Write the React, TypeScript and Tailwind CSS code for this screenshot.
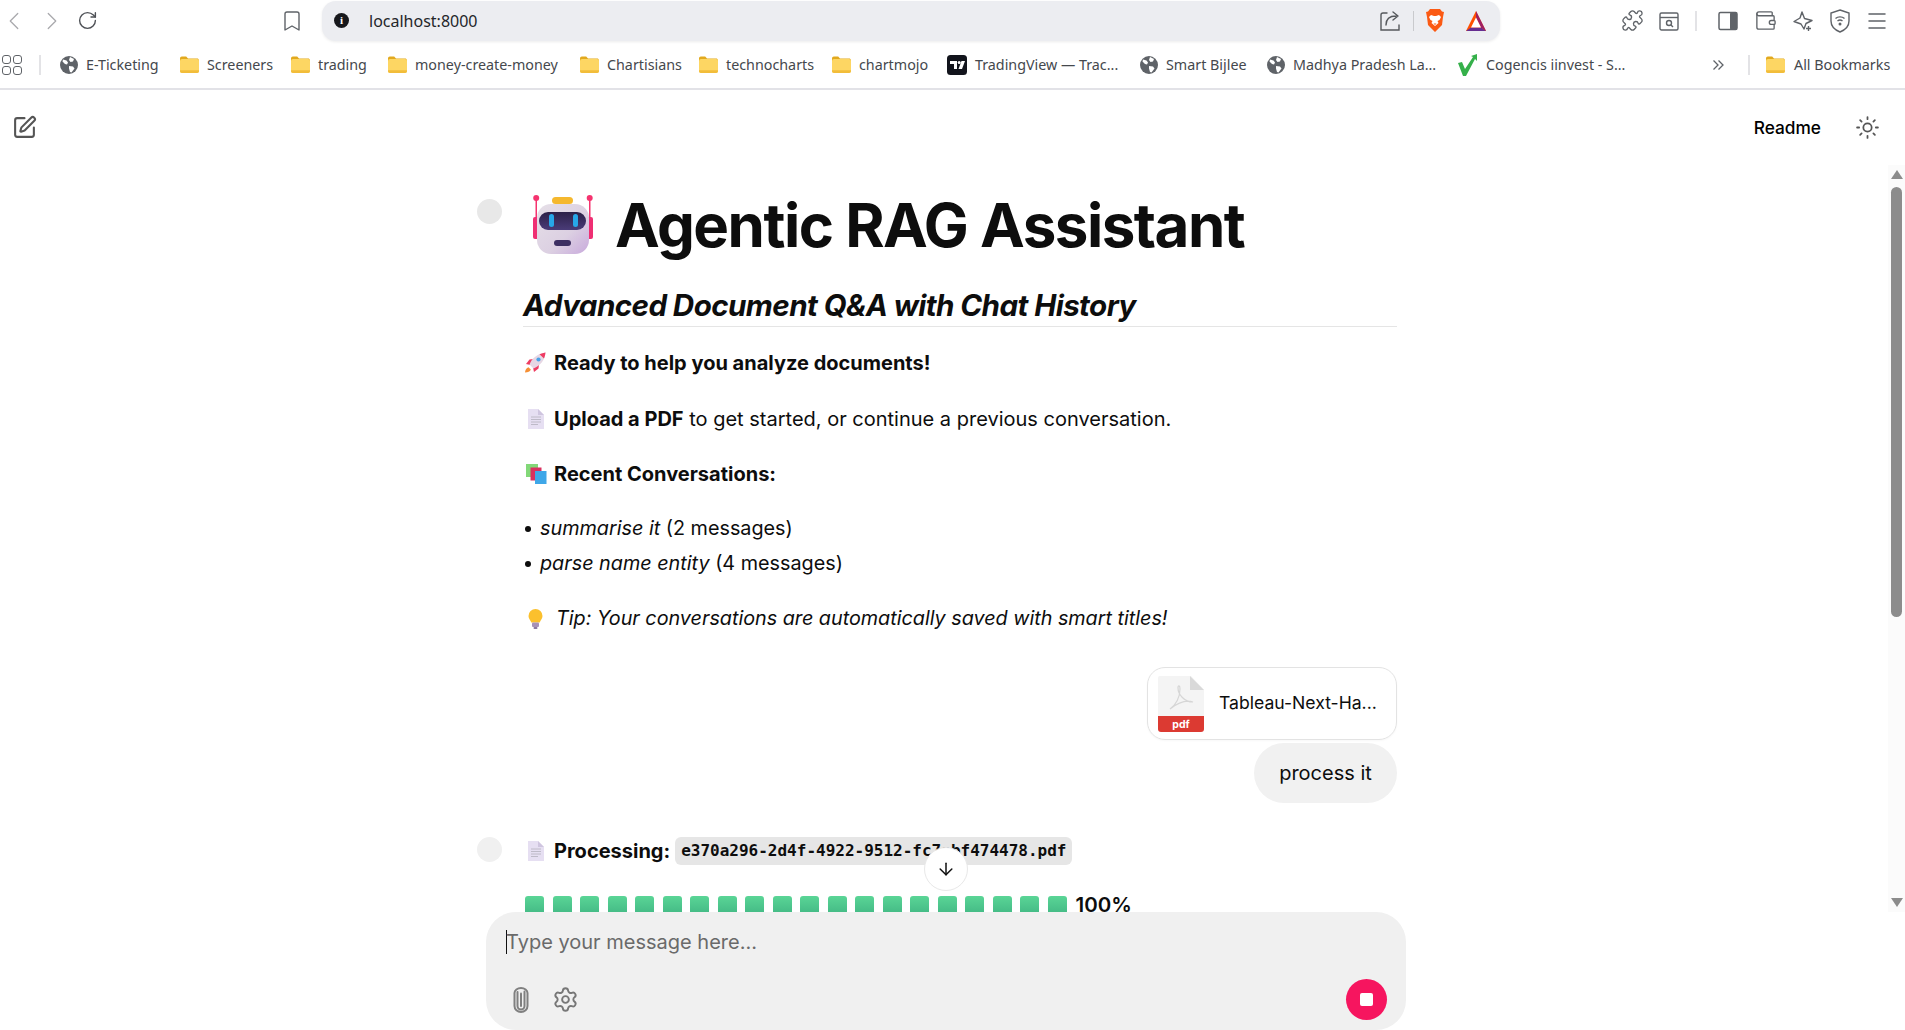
import React from "react";
import { ArrowDown, Bookmark, ChevronLeft, ChevronRight, Menu, Puzzle, RotateCw, Settings, SquarePen, Sun, Wallet } from "lucide-react";

const Folder = () => (
  <svg width="19" height="17" viewBox="0 0 19 17" className="shrink-0">
    <path d="M0 2.500C0 1.400.8.600 1.800.600h4.400l1.800 2h9.200c.9 0 1.600.7 1.600 1.600V8H0z" fill="#e2a91e" />
    <rect x="0" y="3" width="19" height="14" rx="2" fill="#fdd663" />
    <path d="M0 15c0 1.100.9 2 2 2h15c1.100 0 2-.9 2-2v-.8H0z" fill="#f2bd3a" />
  </svg>
);

const Globe = () => (
  <svg width="18" height="18" viewBox="0 0 18 18" className="shrink-0">
    <circle cx="9" cy="9" r="9" fill="#5f6368" />
    <path d="M3 3.500l3.500 1 1.500 2-1 2-2-.5-2.500-2.500zM10 1l4 2-1 2.500-2.500.5-1.500-2zM9 10l4 .5 1.500 2-3 4-1.500-.5-1-3.500z" fill="#fff" />
  </svg>
);

const TradingViewIcon = () => (
  <svg width="20" height="20" viewBox="0 0 20 20" className="shrink-0">
    <rect width="20" height="20" rx="3.500" fill="#12141c" />
    <path d="M3 6h7v8H7V9H3z" fill="#fff" />
    <circle cx="12.200" cy="7.500" r="1.500" fill="#fff" />
    <path d="M14.500 6H18l-3 8h-3.500z" fill="#fff" />
  </svg>
);

const GreenCheck = () => (
  <svg width="20" height="22" viewBox="0 0 20 22" className="shrink-0">
    <path d="M0 9l4-1 3 7L15 3l-2-1 6-2v7l-2-2-9 17H5z" fill="#35b04a" />
  </svg>
);

const BraveLion = () => (
  <svg width="18" height="23" viewBox="0 0 18 23">
    <path d="M4 0h10l2 2.500 2 .5-1 5-1 8-7 7-7-7-1-8-1-5 2-.5z" fill="#fb5a14" />
    <path d="M5 6l3 1h2l3-1 2 2-1.500 3-2 1 1 2-3.500 3-3.500-3 1-2-2-1L3 8z" fill="#fff" />
    <path d="M7.500 14.500h3l-1.500 1.500z" fill="#fb5a14" />
  </svg>
);

const BatTriangle = () => (
  <svg width="20" height="20" viewBox="0 0 20 20">
    <path d="M10 0l10 20H0z" fill="#ff5000" />
    <path d="M10 0l10 20-5-3.500L10 6.500z" fill="#9e1f63" />
    <path d="M0 20l5-3.500h10l5 3.500z" fill="#662d91" />
    <path d="M10 6.500l5 10H5z" fill="#fff" />
  </svg>
);

const Robot = () => (
  <svg width="62" height="62" viewBox="0 0 62 62" className="shrink-0">
    <defs>
      <linearGradient id="head" x1="0" y1="0" x2="1" y2="1">
        <stop offset="0" stopColor="#e6e0e8" />
        <stop offset="0.600" stopColor="#dcd0e2" />
        <stop offset="1" stopColor="#c8a9dc" />
      </linearGradient>
      <linearGradient id="visor" x1="0" y1="0" x2="0" y2="1">
        <stop offset="0" stopColor="#2c2148" />
        <stop offset="1" stopColor="#4a3c78" />
      </linearGradient>
    </defs>
    <rect x="3.500" y="4" width="1.500" height="22" fill="#f5336f" />
    <rect x="57" y="4" width="1.500" height="22" fill="#f5336f" />
    <circle cx="4.200" cy="4" r="3" fill="#f5336f" />
    <circle cx="57.700" cy="4" r="3" fill="#f5336f" />
    <rect x="1" y="23" width="6" height="22" rx="2" fill="#ef2f73" />
    <rect x="55" y="23" width="6" height="22" rx="2" fill="#ef2f73" />
    <rect x="20" y="3" width="21" height="7" rx="3.500" fill="#f5b82e" />
    <rect x="5" y="10" width="52" height="50" rx="14" fill="url(#head)" />
    <rect x="7" y="18" width="47" height="18" rx="9" fill="url(#visor)" />
    <rect x="17" y="20" width="5" height="13" rx="2.500" fill="#27a7e8" />
    <rect x="41" y="20" width="5" height="13" rx="2.500" fill="#27a7e8" />
    <rect x="22" y="46" width="17" height="6" rx="3" fill="#3d2f62" />
  </svg>
);

const Rocket = () => (
  <svg width="21" height="21" viewBox="0 0 21 21" className="shrink-0">
    <path d="M1 12l3.500-4.500 4-.5-3 6z" fill="#ee3d62" />
    <path d="M9 20l4.500-3.500.5-4-6 3z" fill="#ee3d62" />
    <path d="M4.500 12.500C7 6 12 2 20.500.5 20 8 15.500 13.500 8.500 16.500z" fill="#e6d7e4" />
    <path d="M14.500 2.200C16.500 1.400 18.500 1 20.500.5c-.2 2.200-.7 4-1.500 6z" fill="#ef3b63" />
    <circle cx="13.500" cy="7.500" r="2.100" fill="#4aa3e8" />
    <path d="M0 20.500c.2-2.800 1.300-4.500 3.500-5.300l2.300 2.300c-.7 2.200-2.800 3-5.800 3z" fill="#f69035" />
  </svg>
);

const Doc = () => (
  <svg width="16" height="20" viewBox="0 0 16 20" className="shrink-0">
    <path d="M0 0h10l6 6v14H0z" fill="#e6dff2" />
    <path d="M10 0l6 6h-6z" fill="#cfc5df" />
    <path d="M3 8h10M3 10.500h10M3 13h10M3 15.500h7" stroke="#b4b0bd" strokeWidth="0.800" />
  </svg>
);

const Books = () => (
  <svg width="21" height="20" viewBox="0 0 21 20" className="shrink-0">
    <rect x="0" y="0" width="12" height="13" fill="#82d878" />
    <rect x="4.500" y="3.500" width="11" height="13" fill="#d9305f" />
    <rect x="9" y="7" width="11.500" height="13" fill="#3fa7e8" />
  </svg>
);

const Bulb = () => (
  <svg width="15" height="20" viewBox="0 0 15 20" className="shrink-0">
    <path d="M7.500 0a7 7 0 0 1 7 7c0 2.800-1.800 4-2.800 6.500H3.300C2.300 11 .5 9.800.5 7a7 7 0 0 1 7-7z" fill="#fbc02d" />
    <rect x="4" y="13.500" width="7" height="4.500" rx="1" fill="#a792b8" />
    <rect x="5.500" y="18" width="4" height="2" rx="1" fill="#8b78a0" />
  </svg>
);

const PdfIcon = () => (
  <svg width="46" height="56" viewBox="0 0 46 56" className="shrink-0">
    <path d="M2 0h31l13 14v27H0V2a2 2 0 0 1 2-2z" fill="#f4f4f4" />
    <path d="M32 0l14 14H32z" fill="#d9d9d9" />
    <path d="M12 33c6-4 10-12 10-20 0-4-2-4-2-1 0 6 6 14 15 14-6-2-14 0-23 7z" fill="none" stroke="#d6d6d6" strokeWidth="1.200" />
    <path d="M0 40h46v13a3 3 0 0 1-3 3H3a3 3 0 0 1-3-3z" fill="#dc3a32" />
    <text x="23" y="52" textAnchor="middle" fontSize="10.500" fontWeight="700" fill="#fff" fontFamily="Inter, sans-serif">pdf</text>
  </svg>
);

const VerticalClip = () => (
  <svg width="16" height="26" viewBox="0 0 16 26" fill="none" stroke="#808080" strokeWidth="2" strokeLinecap="round" className="ml-[7px]">
    <path d="M8 6.500v12.500" />
    <path d="M11.500 4.500v14.500a3.500 3.500 0 0 1-7 0V6a2.800 4 0 0 1 0-1" />
    <path d="M14.500 6v13a6.500 6 0 0 1-13 0V6a6.500 5 0 0 1 13 0" />
  </svg>
);

const bookmarks = [
  { icon: <Globe />, label: "E-Ticketing", w: "w-[73px]", ml: "ml-[19px]" },
  { icon: <Folder />, label: "Screeners", w: "w-[64px]", ml: "ml-[21px]" },
  { icon: <Folder />, label: "trading", w: "w-[49px]", ml: "ml-[20px]" },
  { icon: <Folder />, label: "money-create-money", w: "w-[144px]", ml: "ml-[21px]" },
  { icon: <Folder />, label: "Chartisians", w: "w-[72px]", ml: "ml-[21px]" },
  { icon: <Folder />, label: "technocharts", w: "w-[85px]", ml: "ml-[20px]" },
  { icon: <Folder />, label: "chartmojo", w: "w-[68px]", ml: "ml-[21px]" },
  { icon: <TradingViewIcon />, label: "TradingView — Trac...", w: "w-[142px]", ml: "ml-[20px]" },
  { icon: <Globe />, label: "Smart Bijlee", w: "w-[78px]", ml: "ml-[23px]" },
  { icon: <Globe />, label: "Madhya Pradesh La...", w: "w-[140px]", ml: "ml-[23px]" },
  { icon: <GreenCheck />, label: "Cogencis iinvest - S...", w: "w-[138px]", ml: "ml-[25px]" },
];

const blocks = Array.from({ length: 20 }, (_, i) => i);

export default function App() {
  return (
    <div className="flex h-[1030px] w-[1905px] flex-col overflow-hidden bg-white font-['Inter',sans-serif] text-[#0d0d0d]">
      {/* Browser toolbar */}
      <div className="flex h-[41px] shrink-0 items-center text-[#5f6368]">
        <ChevronLeft size={30} strokeWidth={1} className="ml-[-1px] text-[#a9a9ad]" />
        <ChevronRight size={30} strokeWidth={1} className="ml-[8px] text-[#a9a9ad]" />
        <RotateCw size={21} strokeWidth={1.6} className="ml-[10px] text-[#4e5156]" />
        <Bookmark size={24} strokeWidth={1.4} className="ml-[182px]" />
        <div className="ml-[18px] flex h-[40px] w-[1178px] items-center rounded-[14px] bg-[#ecedf1] shadow-[0_1px_3px_rgba(0,0,0,0.08)]">
          <span className="ml-[12px] flex size-[15px] items-center justify-center rounded-full bg-[#17181c] font-['Liberation_Serif',serif] text-[11px] font-bold leading-none text-white">i</span>
          <span className="ml-[20px] pt-[1px] font-['Noto_Sans',sans-serif] text-[16px] text-[#24262a]">localhost:8000</span>
          <svg width="22" height="22" viewBox="0 0 22 22" fill="none" stroke="#55585c" strokeWidth="1.400" className="ml-auto">
            <path d="M8 3H4a2 2 0 0 0-2 2v15h18v-5" strokeLinecap="round" />
            <path d="M7 15c0-6 4-9 10-9M14 2l5 4-5 4" strokeLinecap="round" strokeLinejoin="round" />
          </svg>
          <div className="ml-[12px] h-[20px] w-px bg-[#c9cacd]" />
          <div className="ml-[12px] flex"><BraveLion /></div>
          <div className="ml-[22px] mr-[14px] flex"><BatTriangle /></div>
        </div>
        <Puzzle size={23} strokeWidth={1.4} className="ml-[121px]" />
        <svg width="20" height="20" viewBox="0 0 20 20" fill="none" stroke="#5f6368" strokeWidth="1.400" className="ml-[15px]">
          <rect x="1" y="2" width="18" height="17" rx="1.500" />
          <path d="M1 6.500h18" />
          <circle cx="10" cy="12" r="2.500" />
          <path d="M12 14l2 2" />
        </svg>
        <div className="ml-[16px] h-[20px] w-[2px] bg-[#e3e3e6]" />
        <svg width="20" height="20" viewBox="0 0 20 20" className="ml-[21px]">
          <rect x="1" y="1.500" width="18" height="17" rx="1.500" fill="none" stroke="#5f6368" strokeWidth="1.500" />
          <rect x="12" y="1.500" width="7" height="17" rx="1" fill="#5f6368" />
        </svg>
        <Wallet size={23} strokeWidth={1.4} className="ml-[16px]" />
        <svg width="22" height="22" viewBox="0 0 22 22" fill="none" stroke="#5f6368" strokeWidth="1.400" className="ml-[15px]">
          <path d="M10 2l2.500 6.500L20 10.500l-6 3L12 19l-3-5-7-2.500 6-3.500z" strokeLinejoin="round" />
          <path d="M16.500 16v5M14 18.500h5" />
        </svg>
        <svg width="20" height="24" viewBox="0 0 20 24" fill="none" stroke="#5f6368" strokeWidth="1.400" className="ml-[16px]">
          <path d="M10 1l9 3v8c0 5-4 9-9 11-5-2-9-6-9-11V4z" />
          <path d="M5.500 9.500c2.500-2.200 6.500-2.200 9 0M7.500 12c1.500-1.200 3.500-1.200 5 0" />
          <circle cx="10" cy="15" r="0.800" fill="#5f6368" />
        </svg>
        <Menu size={24} strokeWidth={1.5} className="ml-[15px]" />
      </div>

      {/* Bookmarks bar */}
      <div className="flex h-[49px] shrink-0 items-center border-b-2 border-[#e2e2e7] font-['Noto_Sans',sans-serif] text-[14.300px] text-[#45484d]">
        <div className="ml-[2px] grid w-[20px] grid-cols-2 gap-[2px]">
          <span className="size-[9px] rounded-[3px] border-[1.5px] border-[#5f6368]" />
          <span className="size-[9px] rounded-[3px] border-[1.5px] border-[#5f6368]" />
          <span className="size-[9px] rounded-[3px] border-[1.5px] border-[#5f6368]" />
          <span className="size-[9px] rounded-[3px] border-[1.5px] border-[#5f6368]" />
        </div>
        <div className="ml-[17px] h-[20px] w-[2px] bg-[#e3e3e6]" />
        {bookmarks.map((b) => (
          <div key={b.label} className={`flex items-center gap-[8px] ${b.ml}`}>
            {b.icon}
            <span className={`whitespace-nowrap ${b.w}`}>{b.label}</span>
          </div>
        ))}
        <svg width="12" height="12" viewBox="0 0 12 12" fill="none" stroke="#5f6368" strokeWidth="1.300" className="ml-[88px]">
          <path d="M1.500 1.500L6 6l-4.500 4.500M6.500 1.500L11 6l-4.500 4.500" />
        </svg>
        <div className="ml-[24px] h-[20px] w-[2px] bg-[#e3e3e6]" />
        <div className="ml-[16px] flex items-center gap-[9px]">
          <Folder />
          <span className="whitespace-nowrap">All Bookmarks</span>
        </div>
      </div>

      {/* App header */}
      <div className="flex h-[75px] shrink-0 items-start justify-between pt-[25px]">
        <SquarePen size={25} strokeWidth={2} className="ml-[12px] text-[#555]" />
        <div className="flex items-center">
          <span className="text-[17.300px] font-medium text-black">Readme</span>
          <Sun size={25} strokeWidth={1.7} className="ml-[34px] mr-[25px] text-[#555]" />
        </div>
      </div>

      {/* Messages */}
      <div className="relative flex min-h-0 flex-1">
        <div className="min-w-0 flex-1 overflow-hidden">
          <div className="mx-auto w-[940px] pl-[3px] pr-[17px] pt-[24px]">
            <div className="flex gap-[21px]">
              <div className="mt-[10px] size-[25px] shrink-0 rounded-full bg-[#e8e8e8]" />
              <div className="min-w-0 flex-1">
                <div className="flex items-center pl-[9px]">
                  <Robot />
                  <h1 className="ml-[21px] text-[60px] font-bold leading-[72px] tracking-[-0.025em]">Agentic RAG Assistant</h1>
                </div>
                <h2 className="mt-[26px] border-b border-[#e5e5e5] pb-[2px] text-[29.600px] font-bold italic leading-[37px] tracking-[-0.02em]">Advanced Document Q&amp;A with Chat History</h2>
                <div className="mt-[18px] flex h-[35px] items-center gap-[8px] pl-[2px] text-[20px] font-bold">
                  <Rocket />
                  <span>Ready to help you analyze documents!</span>
                </div>
                <div className="mt-[21px] flex h-[35px] items-center pl-[5px] text-[20px]">
                  <Doc />
                  <span className="ml-[10px]"><b className="font-bold">Upload a PDF</b> to get started, or continue a previous conversation.</span>
                </div>
                <div className="mt-[20px] flex h-[35px] items-center gap-[8px] pl-[3px] text-[20px] font-bold">
                  <Books />
                  <span className="ml-[-1px]">Recent Conversations:</span>
                </div>
                <ul className="mt-[20px] text-[19.800px]">
                  <li className="flex h-[35px] items-center">
                    <span className="ml-[2px] mr-[9px] size-[6px] rounded-full bg-[#0d0d0d]" />
                    <span><i>summarise it</i> (2 messages)</span>
                  </li>
                  <li className="flex h-[35px] items-center">
                    <span className="ml-[2px] mr-[9px] size-[6px] rounded-full bg-[#0d0d0d]" />
                    <span><i>parse name entity</i> (4 messages)</span>
                  </li>
                </ul>
                <div className="mt-[20px] flex h-[35px] items-center pl-[5px] text-[19.750px]">
                  <Bulb />
                  <i className="ml-[13px]">Tip: Your conversations are automatically saved with smart titles!</i>
                </div>
              </div>
            </div>

            <div className="mt-[31px] flex flex-col items-end">
              <div className="flex h-[73px] w-[250px] items-center rounded-[18px] border border-[#e3e3e3] pl-[10px] shadow-[0_1px_2px_rgba(0,0,0,0.03)]">
                <PdfIcon />
                <span className="ml-[15px] text-[17.600px]">Tableau-Next-Ha...</span>
              </div>
              <div className="mt-[3px] flex h-[60px] w-[143px] items-center justify-center rounded-[30px] bg-[#f1f1f1] text-[20px]">process it</div>
            </div>

            <div className="mt-[34px] flex gap-[21px]">
              <div className="size-[25px] shrink-0 rounded-full bg-[#f0f0f0]" />
              <div className="min-w-0 flex-1">
                <div className="flex h-[28px] items-center pl-[5px] text-[20px] font-bold">
                  <Doc />
                  <span className="ml-[10px]">Processing:</span>
                  <code className="ml-[5px] flex h-[28px] items-center rounded-[6px] bg-[#e6e6e6] px-[6px] font-['DejaVu_Sans_Mono',monospace] text-[16px] font-bold">e370a296-2d4f-4922-9512-fc7abf474478.pdf</code>
                </div>
                <div className="mt-[25px] flex items-center pl-[2px]">
                  <div className="flex gap-[8.500px]">
                    {blocks.map((i) => (
                      <span key={i} className="h-[19px] w-[19px] rounded-[3px] bg-gradient-to-b from-[#5ad596] to-[#42b884]" />
                    ))}
                  </div>
                  <span className="ml-[9px] text-[20.500px] font-semibold">100%</span>
                </div>
              </div>
            </div>
          </div>
        </div>

        {/* Scrollbar */}
        <div className="flex w-[17px] shrink-0 flex-col items-center bg-[#fbfbfb] pt-[5px]">
          <span className="h-0 w-0 border-x-[6px] border-b-[9px] border-x-transparent border-b-[#8c8c8c]" />
          <span className="mt-[8px] h-[430px] w-[11px] rounded-full bg-[#8c8c8c]" />
          <span className="mb-[5px] mt-auto h-0 w-0 border-x-[6px] border-t-[9px] border-x-transparent border-t-[#8c8c8c]" />
        </div>

        <button className="absolute bottom-[21px] left-[924px] flex size-[44px] items-center justify-center rounded-full border border-[#e8e8e8] bg-white">
          <ArrowDown size={20} strokeWidth={1.8} className="text-[#111]" />
        </button>
      </div>

      {/* Composer */}
      <div className="ml-[486px] flex h-[118px] w-[920px] shrink-0 flex-col overflow-visible">
        <div className="relative h-[140px] rounded-[30px] bg-[#f0f0f0] pl-[20px] pr-[20px] pt-[18px]">
          <div className="flex items-center text-[20px] leading-[24px] text-[#6a6a6a]">
            <span className="mr-[-1px] h-[24px] w-px bg-[#111]" />
            <span>Type your message here...</span>
          </div>
          <div className="mt-[25px] flex items-center">
            <VerticalClip />
            <Settings size={27} strokeWidth={1.7} className="ml-[23px] text-[#777]" />
            <div className="ml-auto mr-[-1px] flex size-[41px] items-center justify-center rounded-full bg-[#f6155f]">
              <span className="size-[13px] rounded-[2px] bg-white" />
            </div>
          </div>
        </div>
      </div>
    </div>
  );
}
